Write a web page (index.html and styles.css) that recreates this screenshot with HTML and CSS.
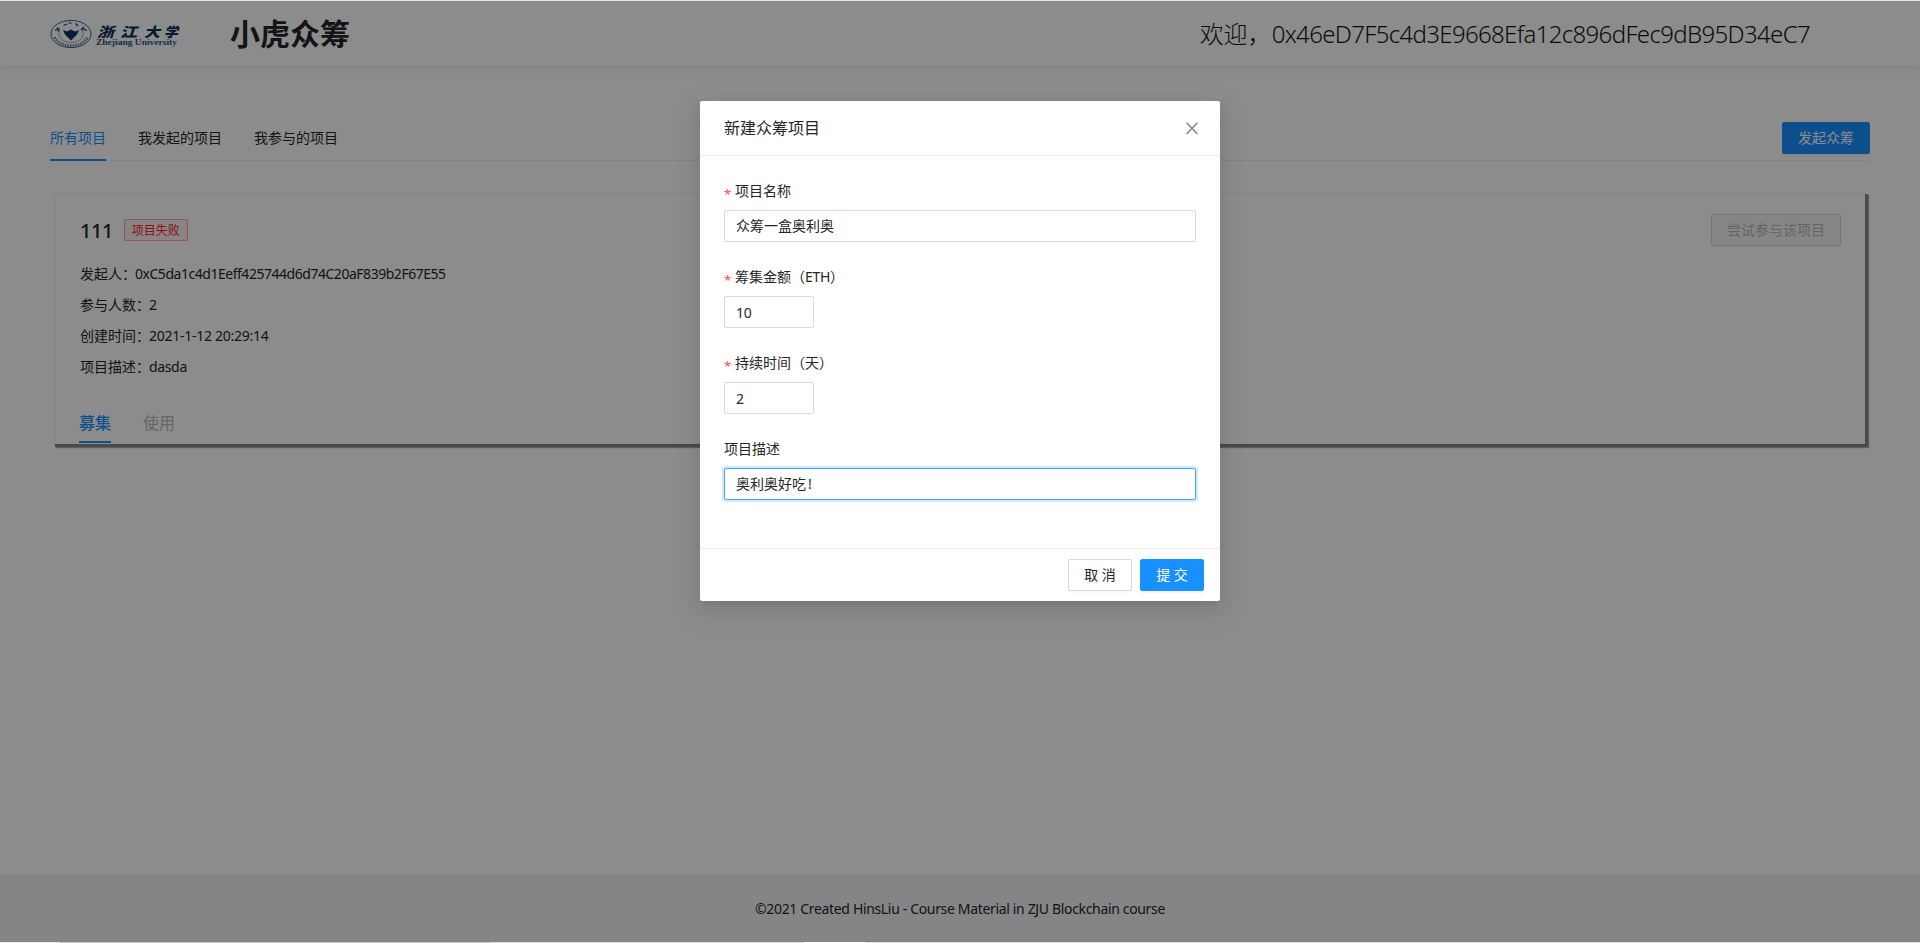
FILE: index.html
```html
<!DOCTYPE html>
<html lang="zh-CN">
<head>
<meta charset="utf-8">
<title>小虎众筹</title>
<link rel="stylesheet" href="styles.css">
</head>
<body>
<div class="page">
  <header class="header">
    <svg class="logo" width="132" height="32" viewBox="0 0 132 32">
      <g fill="none" stroke="#0a3b70">
        <ellipse cx="21" cy="16" rx="20" ry="13.6" stroke-width=".8"/>
        <path d="M4.5 19.5C8 25 14 27.6 21 27.6S34 25 37.5 19.5" stroke-width="2.6" stroke-dasharray="1.5 1.1" opacity=".65"/>
        <path d="M9.500 12C7.500 18 11 24.500 21 24.500S34.500 18 32.500 12" stroke-width=".6" opacity=".7"/>
        <path d="M5 12.500l5-2M7 9.500l2 4M37 12.500l-5-2M31 12l3-3M13.500 7.500l3.500-1.500M25.500 5.500l2.500 2.500M18.500 4.500l3 1" stroke-width="1.200"/>
      </g>
      <path d="M13 12l4 1.500 4-2 4 2 4-1.500-2 4.500-6 6-6-6z" fill="#063566"/>
      <g class="logo-cn">
        <text x="47" y="18.5" textLength="17" lengthAdjust="spacingAndGlyphs">浙</text>
        <text x="70" y="18.5" textLength="17" lengthAdjust="spacingAndGlyphs">江</text>
        <text x="94" y="18.5" textLength="16" lengthAdjust="spacingAndGlyphs">大</text>
        <text x="114" y="18.5" textLength="14" lengthAdjust="spacingAndGlyphs">学</text>
      </g>
      <text class="logo-en" x="46" y="27" textLength="81" lengthAdjust="spacingAndGlyphs">Zhejiang University</text>
    </svg>
    <h1 class="brand">小虎众筹</h1>
    <div class="welcome">欢迎，<span class="welcome-id">0x46eD7F5c4d3E9668Efa12c896dFec9dB95D34eC7</span></div>
  </header>

  <main class="main">
    <nav class="tabs">
      <span class="tab tab-active">所有项目</span>
      <span class="tab">我发起的项目</span>
      <span class="tab">我参与的项目</span>
      <button class="btn btn-primary tabs-extra">发起众筹</button>
    </nav>

    <section class="card">
      <div class="card-head">
        <span class="card-title">111</span>
        <span class="tag">项目失败</span>
        <button class="btn btn-disabled">尝试参与该项目</button>
      </div>
      <div class="card-info">
        <div>发起人：<span class="address">0xC5da1c4d1Eeff425744d6d74C20aF839b2F67E55</span></div>
        <div>参与人数：<span class="val">2</span></div>
        <div>创建时间：<span class="val date">2021-1-12 20:29:14</span></div>
        <div>项目描述：<span class="val">dasda</span></div>
      </div>
      <div class="card-tabs">
        <span class="card-tab card-tab-active">募集</span>
        <span class="card-tab">使用</span>
      </div>
    </section>
  </main>

  <footer class="footer"><span class="copyright">©2021 Created HinsLiu - Course Material in ZJU Blockchain course</span></footer>

  <div class="mask">
    <div class="modal">
      <div class="modal-head">
        <span>新建众筹项目</span>
        <svg class="close" width="16" height="16" viewBox="0 0 16 16"><path d="M2.600 2.700l10.800 11.200M13.400 2.700L2.600 13.900" stroke="#868686" stroke-width="1.500" fill="none"/></svg>
      </div>
      <div class="modal-body">
        <div class="field">
          <div class="label"><i class="req">*</i>项目名称</div>
          <div class="input">众筹一盒奥利奥</div>
        </div>
        <div class="field">
          <div class="label"><i class="req">*</i>筹集金额（<span class="eth">ETH</span>）</div>
          <div class="input input-short">10</div>
        </div>
        <div class="field">
          <div class="label"><i class="req">*</i>持续时间（天）</div>
          <div class="input input-short">2</div>
        </div>
        <div class="field">
          <div class="label">项目描述</div>
          <div class="input input-focus">奥利奥好吃<span class="bang">!</span></div>
        </div>
      </div>
      <div class="modal-foot">
        <button class="btn">取 消</button>
        <button class="btn btn-primary">提 交</button>
      </div>
    </div>
  </div>
</div>
<div class="bottom-strip"></div>
</body>
</html>
```
FILE: styles.css
```css
* { box-sizing: border-box; }

body {
  margin: 0;
  height: 943px;
  overflow: hidden;
  border-top: 1px solid #dee1e6;
  font: 14px/22px "Noto Sans", "Noto Sans CJK SC", sans-serif;
  color: #262626;
  background: #fff;
}

.page {
  position: relative;
  height: 941px;
  display: flex;
  flex-direction: column;
  overflow: hidden;
}

.bottom-strip {
  height: 1px;
  background: linear-gradient(90deg, #eaeaea 60px, #c9c9c9 60px 490px, #dfdfdf 490px 804px, #fff 804px 865px, #e2e2e2 865px);
}

.header {
  flex: none;
  height: 64px;
  display: flex;
  align-items: center;
  padding: 2px 110px 0 50px;
  box-shadow: 0 2px 8px #e6e7e8;
}

.logo { flex: none; }
.logo-cn text { font: italic 900 13.5px "Noto Sans CJK SC", sans-serif; fill: #0a3460; }
.logo-en { font: bold 7.5px "Liberation Serif", serif; fill: #2c527c; }

.brand {
  margin: 0 0 0 48px;
  font-size: 30px;
  line-height: 40px;
  font-weight: 700;
}

.welcome {
  margin-left: auto;
  font-size: 24px;
  line-height: 36px;
  font-weight: 300;
  color: #141414;
  white-space: nowrap;
}
.welcome-id { letter-spacing: -0.66px; }

.main { flex: 1; padding: 49px 50px 0; }

.tabs {
  height: 47px;
  display: flex;
  align-items: stretch;
  gap: 32px;
  border-bottom: 1px solid #f0f0f0;
}
.tab { padding-top: 13px; height: 47px; white-space: nowrap; }
.tab-active { color: #1890ff; border-bottom: 2px solid #1890ff; }
.tabs-extra { margin: 8px 0 0 auto; }

.btn {
  height: 32px;
  padding: 0 15px;
  border: 1px solid #d9d9d9;
  border-radius: 2px;
  background: #fff;
  color: #262626;
  font: inherit;
  line-height: 30px;
  white-space: nowrap;
  box-shadow: 0 2px 0 rgba(0, 0, 0, 0.016);
}
.btn-primary {
  background: #1890ff;
  border-color: #1890ff;
  color: #fff;
  box-shadow: 0 2px 0 rgba(0, 0, 0, 0.045);
}
.btn-disabled {
  margin-left: auto;
  background: #f5f5f5;
  color: #b8b8b8;
  box-shadow: none;
}

.card {
  margin: 32px 5px 0 4px;
  height: 251px;
  padding: 20px 24px 0 24px;
  border: 1px solid #f0f0f0;
  border-right: 0;
  border-bottom: 0;
  background: #fff;
  box-shadow: 2px 2px 0 1px #888, 3px 3px 1px 1px #aaa;
}
.card-head { display: flex; height: 32px; align-items: center; }
.card-title { padding-top: 1px; font-size: 20px; line-height: 32px; font-weight: 500; letter-spacing: -0.5px; margin: 0 11px 0 1px; }
.tag {
  height: 22px;
  padding: 0 7px;
  border: 1px solid #ffa39e;
  border-radius: 2px;
  background: #fff1f0;
  color: #f5222d;
  font-size: 12px;
  line-height: 21px;
}
.card-info { margin: 12px 0 0 1px; line-height: 31px; }
.address { margin-left: -1px; letter-spacing: -0.47px; }
.val { margin-left: -1px; letter-spacing: -0.35px; }
.date { letter-spacing: -0.27px; }
.eth { letter-spacing: -0.3px; }
.bang { margin-left: 2px; }

.card-tabs { display: flex; gap: 32px; margin-top: 29px; font-size: 16px; }
.card-tab { height: 32px; line-height: 24px; color: #b8b8b8; }
.card-tab-active { color: #1890ff; font-weight: 500; border-bottom: 2px solid #1890ff; }

.footer {
  flex: none;
  height: 68px;
  padding-top: 24px;
  background: #f0f2f5;
  text-align: center;
}
.copyright { letter-spacing: -0.34px; }

.mask {
  position: absolute;
  inset: 0;
  padding-top: 100px;
  background: rgba(0, 0, 0, 0.45);
}
.modal {
  width: 520px;
  height: 500px;
  margin: 0 auto;
  display: flex;
  flex-direction: column;
  border-radius: 2px;
  background: #fff;
  box-shadow: 0 3px 6px -4px rgba(0, 0, 0, .12), 0 6px 16px rgba(0, 0, 0, .08), 0 9px 28px 8px rgba(0, 0, 0, .05);
}
.modal-head {
  height: 55px;
  padding: 0 20px 0 24px;
  display: flex;
  align-items: center;
  justify-content: space-between;
  border-bottom: 1px solid #f0f0f0;
  font-size: 16px;
  font-weight: 400;
}
.modal-body { flex: 1; padding: 24px; }
.field { height: 86px; }
.label { height: 30px; line-height: 22px; }
.req {
  display: inline-block;
  width: 11px;
  padding-left: 0;
  color: #ff4d4f;
  font: 13px/0 "Noto Sans", sans-serif;
  vertical-align: -3px;
}
.input {
  height: 32px;
  padding: 0 11px;
  border: 1px solid #d9d9d9;
  border-radius: 2px;
  line-height: 30px;
}
.input-short { width: 90px; line-height: 32px; letter-spacing: -0.35px; }
.input-focus { border-color: #40a9ff; box-shadow: 0 0 0 2px rgba(24, 144, 255, 0.2); }
.modal-foot {
  height: 53px;
  padding: 10px 16px;
  display: flex;
  justify-content: flex-end;
  gap: 8px;
  border-top: 1px solid #f0f0f0;
}
.modal-foot .btn { width: 64px; }
```
